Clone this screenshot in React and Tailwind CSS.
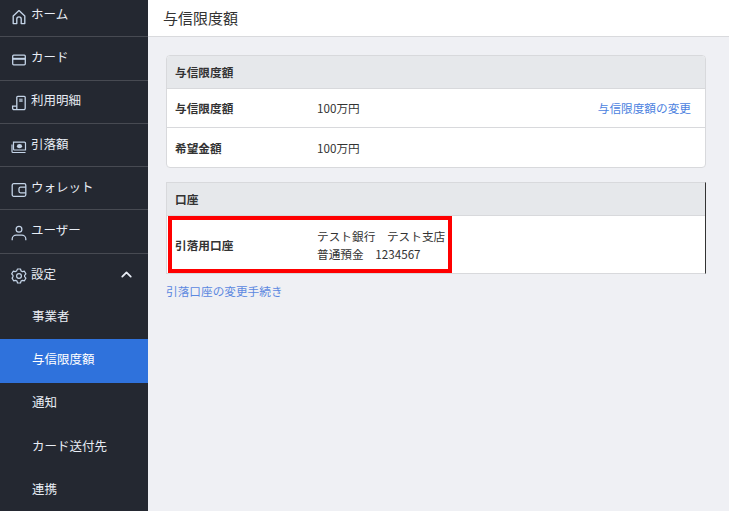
import { ChevronUp } from "lucide-react";

const HomeIcon = () => (
  <svg viewBox="0 0 16 16" className="w-[16px] h-[16px]" fill="none" stroke="currentColor" strokeWidth="1.35" strokeLinejoin="round">
    <path d="M2.2 14.6V6.9L8 1.6l5.800 5.300v7.700H10.200V10a2.200 2.200 0 0 0-4.400 0v4.600z" />
  </svg>
);

const CardIcon = () => (
  <svg viewBox="0 0 16 16" className="w-[16px] h-[16px]" fill="none" stroke="currentColor" strokeWidth="1.3">
    <rect x="1.7" y="3.2" width="12.6" height="9.6" rx="1" />
    <path d="M2 6.8h12" strokeWidth="2" />
  </svg>
);

const ReceiptIcon = () => (
  <svg viewBox="0 0 16 16" className="w-[16px] h-[16px]" fill="none" stroke="currentColor" strokeWidth="1.3">
    <path d="M5.800 14.700V2.300a1 1 0 0 1 1-1h6.400a1 1 0 0 1 1 1v11a1.400 1.400 0 0 1-1.400 1.400H3a1.400 1.400 0 0 1-1.400-1.400v-2.200h4.200" />
    <rect x="8.200" y="3.600" width="3.400" height="3.400" fill="currentColor" stroke="none" opacity="0.7" />
  </svg>
);

const MoneyIcon = () => (
  <svg viewBox="0 0 16 16" className="w-[16px] h-[16px]" fill="none" stroke="currentColor" strokeWidth="1.2">
    <path d="M2.500 3.200h11a1 1 0 0 1 1 1V11h-11a1 1 0 0 1-1-1z" />
    <path d="M1 5.500v7a1 1 0 0 0 1 1h12.500" />
    <ellipse cx="8.500" cy="7.200" rx="2.600" ry="2.100" fill="currentColor" stroke="none" />
  </svg>
);

const WalletIcon = () => (
  <svg viewBox="0 0 16 16" className="w-[16px] h-[16px]" fill="none" stroke="currentColor" strokeWidth="1.3">
    <rect x="1.200" y="1.700" width="13.600" height="12.600" rx="1.500" />
    <path d="M14.800 5.200H9.500A1.500 1.500 0 0 0 8 6.700v2.600a1.500 1.500 0 0 0 1.500 1.500h5.300" />
  </svg>
);

const UserIcon = () => (
  <svg viewBox="0 0 16 16" className="w-[16px] h-[16px]" fill="none" stroke="currentColor" strokeWidth="1.250">
    <circle cx="8" cy="4.200" r="2.900" />
    <path d="M1.200 15.200v-1.400c0-2 2-3.600 4-3.600h5.600c2 0 4 1.600 4 3.600v1.400" />
  </svg>
);

const GearIcon = () => (
  <svg viewBox="0 0 16 16" className="w-[16px] h-[16px]" fill="none" stroke="currentColor" strokeWidth="1.200">
    <circle cx="8" cy="8" r="2.400" />
    <path d="M6.500 1h3l.5 1.900 1.500.8 1.900-.5 1.500 2.700-1.300 1.400v1.400l1.300 1.400-1.500 2.700-1.900-.5-1.500.8-.5 1.900h-3l-.5-1.900-1.500-.8-1.900.5-1.500-2.700L2 8.700V7.300L.7 5.900l1.500-2.700 1.900.5 1.500-.8z" strokeLinejoin="round" />
  </svg>
);

const mainItems = [
  { label: "ホーム", Icon: HomeIcon },
  { label: "カード", Icon: CardIcon },
  { label: "利用明細", Icon: ReceiptIcon },
  { label: "引落額", Icon: MoneyIcon },
  { label: "ウォレット", Icon: WalletIcon },
  { label: "ユーザー", Icon: UserIcon },
];

const subItems = ["事業者", "与信限度額", "通知", "カード送付先", "連携"];

function Sidebar() {
  return (
    <aside className="w-[148px] shrink-0 h-full overflow-hidden bg-[#242831] text-[#e8edf5] text-[12.5px]">
      <nav className="-mt-[6px]">
        {mainItems.map(({ label, Icon }) => (
          <div key={label} className="h-[43.3px] flex items-center gap-[4px] pl-[11px] border-b border-[#474a52]">
            <span className="text-[#c4d4e8] pt-[3px]">
              <Icon />
            </span>
            <span className="pb-[2px]">{label}</span>
          </div>
        ))}
        <div className="h-[42.3px] flex items-center gap-[4px] pl-[11px]">
          <span className="text-[#c4d4e8] pt-[3px]">
            <GearIcon />
          </span>
          <span className="pb-[2px]">設定</span>
          <ChevronUp className="ml-auto mr-[13px] w-[17px] h-[17px]" strokeWidth={2.5} />
        </div>
        {subItems.map((label) => (
          <div
            key={label}
            className={`h-[43.3px] flex items-center pl-[32px] pb-[3px] ${label === "与信限度額" ? "bg-[#2f72dc] text-white" : ""}`}
          >
            {label}
          </div>
        ))}
      </nav>
    </aside>
  );
}

function Row({ label, children, action, className = "" }) {
  return (
    <div className={`h-[39px] flex items-center px-[8px] ${className}`}>
      <div className="w-[142px] font-bold shrink-0">{label}</div>
      <div className="flex-1">{children}</div>
      {action && <a className="text-[#4b7fe0] mr-[6px]">{action}</a>}
    </div>
  );
}

export default function App() {
  return (
    <div
      className="w-[729px] h-[511px] flex overflow-hidden bg-[#eff0f4] text-[#333333] text-[11.67px]"
      style={{ fontFamily: '"Noto Sans CJK JP", "Noto Sans", sans-serif' }}
    >
      <Sidebar />
      <main className="flex-1 min-w-0">
        <header className="h-[37px] bg-white border-b border-[#d9dadd] flex items-center pl-[15px] text-[15px]">
          与信限度額
        </header>
        <div className="pt-[18px] px-[18px] pr-[23px]">
          <section className="bg-white border border-[#d8d9dc] rounded-[4px] overflow-hidden">
            <div className="h-[33px] bg-[#e6e8eb] border-b border-[#d8d9dc] flex items-center px-[8px] font-bold">
              与信限度額
            </div>
            <Row label="与信限度額" action="与信限度額の変更" className="border-b border-[#d8d9dc]">
              100万円
            </Row>
            <Row label="希望金額">100万円</Row>
          </section>
          <section className="mt-[14px] bg-white border border-[#d8d9dc] border-r-[#333333]">
            <div className="h-[33px] bg-[#e6e8eb] border-b border-[#d8d9dc] flex items-center px-[8px] font-bold">
              口座
            </div>
            <div className="relative h-[57px] flex items-center px-[8px]">
              <div className="w-[142px] font-bold shrink-0">引落用口座</div>
              <div className="leading-[18px]">
                <div>テスト銀行　テスト支店</div>
                <div>普通預金　1234567</div>
              </div>
              <div className="absolute left-[1px] top-0 w-[284px] h-[57px] border-[4px] border-[#ff0000]" />
            </div>
          </section>
          <a className="block mt-[8px] text-[#5c88e0]">引落口座の変更手続き</a>
        </div>
      </main>
    </div>
  );
}
